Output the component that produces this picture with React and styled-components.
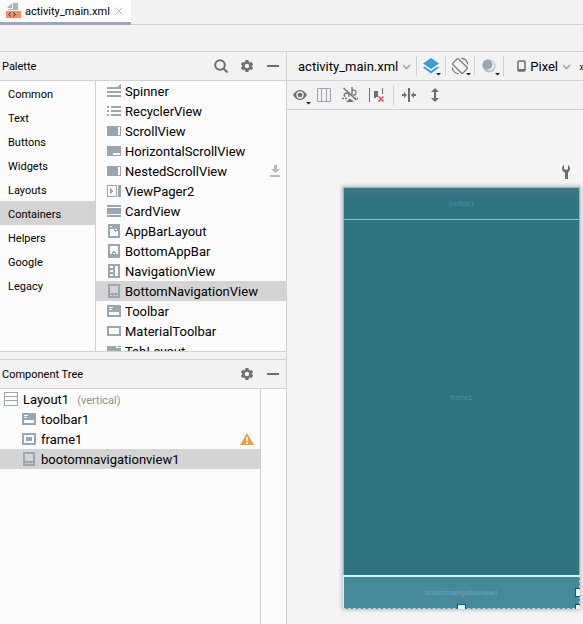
import React, { useState } from "react";
import styled, { createGlobalStyle } from "styled-components";

const line = "#d1d1d1";
const chrome = "#f2f2f2";
const list = "#fcfcfc";
const selected = "#d4d4d4";
const steel = "#9aa7b0";
const ink = "#6e6e6e";

const Global = createGlobalStyle`
  * { box-sizing: border-box; }
  html, body { margin: 0; }
  body {
    background: ${chrome};
    color: #000;
    font-family: Roboto, Inter, "Liberation Sans", sans-serif;
    font-size: 13px;
    overflow-x: hidden;
  }
  button { font: inherit; color: inherit; background: none; border: 0; padding: 0; margin: 0; text-align: left; }
  svg { display: block; flex: none; }
  ul { list-style: none; margin: 0; padding: 0; }
`;

const Page = styled.div`
  display: flex;
  flex-direction: column;
  min-height: 100vh;
`;

const TabBar = styled.div`
  display: flex;
  height: 25px;
  border-bottom: 1px solid ${line};
`;

const FileTab = styled.div`
  display: flex;
  align-items: center;
  height: 25px;
  padding: 0 8px 0 5px;
  background: #fff;
  border-bottom: 3px solid #9aa5b9;
  font-size: 11px;
`;

const TabName = styled.button`
  display: flex;
  align-items: center;
  gap: 4px;
  margin-right: 5px;
`;

const NavBar = styled.div`
  height: 27px;
  border-bottom: 1px solid ${line};
`;

const Workspace = styled.div`
  display: flex;
  flex: 1;
`;

const Side = styled.aside`
  display: flex;
  flex-direction: column;
  flex: 0 0 287px;
  border-right: 1px solid ${line};
`;

const PanelHeader = styled.header`
  display: flex;
  align-items: center;
  height: 29px;
  padding: 0 5px 0 2px;
  gap: 10px;
  border-bottom: 1px solid ${line};
  font-size: 11px;
`;

const PanelTitle = styled.h2`
  flex: 1;
  margin: 0;
  font-size: 11px;
  font-weight: 400;
`;

const PaletteBody = styled.div`
  display: flex;
  height: 271px;
  overflow: hidden;
  background: ${list};
  border-bottom: 1px solid ${line};
`;

const Categories = styled.ul`
  flex: 0 0 96px;
  border-right: 1px solid ${line};
`;

const Category = styled.button`
  display: block;
  width: 100%;
  height: 24px;
  padding: 3px 8px 0;
  font-size: 11px;
  background: ${(p) => (p.$on ? selected : "transparent")};
`;

const Items = styled.ul`
  flex: 1;
  min-width: 0;
`;

const Row = styled.button`
  display: flex;
  align-items: center;
  gap: ${(p) => p.$gap || 4}px;
  width: 100%;
  height: 20px;
  padding: 0 6px 0 ${(p) => p.$indent}px;
  white-space: nowrap;
  background: ${(p) => (p.$on ? selected : "transparent")};
`;

const RowText = styled.span`
  flex: 1;
  padding-top: 2px;
  line-height: 18px;
`;

const Hint = styled.span`
  margin-left: 8px;
  font-size: 11px;
  color: #8f8f8f;
`;

const Splitter = styled.div`
  height: 8px;
  border-bottom: 1px solid ${line};
`;

const TreeBody = styled.div`
  flex: 1;
  padding-right: 25px;
  background: ${list};
`;

const Tree = styled.ul`
  height: 100%;
  border-right: 1px solid ${line};
`;

const Editor = styled.main`
  display: flex;
  flex-direction: column;
  flex: 1;
  min-width: 0;
`;

const Toolbar = styled.div`
  display: flex;
  align-items: center;
  height: 29px;
  padding-left: ${(p) => p.$lead || 0}px;
  border-bottom: 1px solid ${line};
  overflow: hidden;
`;

const MenuButton = styled.button`
  display: flex;
  align-items: center;
  gap: 4px;
  flex: none;
  height: 28px;
  padding: 0 ${(p) => p.$end}px 0 ${(p) => p.$start || 0}px;
`;

const IconButton = styled.button`
  flex: none;
`;

const Divider = styled.span`
  flex: none;
  width: 1px;
  height: 20px;
  margin: 0 ${(p) => p.$space || 0}px;
  background: ${line};
`;

const Canvas = styled.div`
  display: flex;
  flex-direction: column;
  flex: 1;
  padding: 55px 3px 15px 56px;
  background: #f5f5f5;
`;

const CanvasTools = styled.div`
  display: flex;
  align-items: flex-start;
  justify-content: flex-end;
  height: 22px;
  padding-right: 10px;
`;

const Device = styled.div`
  position: relative;
  display: flex;
  flex-direction: column;
  flex: 1;
  min-height: 300px;
  border: 1px solid #74c3d5;
  background: #2f7282;
  color: #4e93a3;
  font-family: "Liberation Sans", sans-serif;
  font-size: 7px;
  box-shadow: 0 0 4px 1px rgba(0, 0, 0, 0.25);
`;

const Block = styled.div`
  display: flex;
  align-items: center;
  justify-content: center;
`;

const BarBlock = styled(Block)`
  height: 32px;
  border-bottom: 1px solid #74c9da;
  background: linear-gradient(#3f7585, #2f7282 45%);
`;

const FrameBlock = styled(Block)`
  flex: 1;
`;

const BottomBlock = styled(Block)`
  height: 34px;
  margin: 0 -1px -1px;
  border: 1px dashed #9fe0ee;
  border-top: 2px solid #d5f1f7;
  border-left: 1px solid #d5f1f7;
  background: #46899a;
  color: #69a6b5;
`;

const Handle = styled.span`
  position: absolute;
  border: 1px solid #14566a;
  background: #e6fbff;
  ${(p) => p.$at === "bottom" && "left: calc(50% - 5px); bottom: -1px; width: 9px; height: 5px; border-bottom: 0;"}
  ${(p) => p.$at === "right" && "right: -1px; bottom: 11px; width: 5px; height: 9px; border-right: 0;"}
  ${(p) => p.$at === "corner" && "right: -1px; bottom: -1px; width: 5px; height: 5px; border-right: 0; border-bottom: 0;"}
`;

const shapes = {
  spinner: "M0 3h10l4-3v5H0zM0 7h14v2H0zM0 11h14v2H0z",
  recycler: "M0 2h2v2H0zM4 2h10v2H4zM0 6h2v2H0zM4 6h10v2H4zM0 10h2v2H0zM4 10h10v2H4z",
  scroll: "M0 2h14v10H0zM11 3v8h2V3z",
  hscroll: "M0 2h14v10H0zM6 9v2h7V9z",
  pager: "M0 1h10v12H0zM1 2v10h8V2zM11 1h3v12h-3zM3 4l4 3-4 3z",
  card: "M0 1h14v2H0zM0 4h14v6H0zM0 11h14v2H0z",
  appbar: "M1 0h12v14H1zM3 2v1h2V2zM3 5v7h8V7H9v1H8V7H7V5zM8 5v1h2V5z",
  bottombar: "M1 0h12v14H1zM3 2v8h2V8h1V7h2v1h1v2h2V2zM6 9v1h2V9z",
  navigation: "M1 0h12v14H1zM3 2v2h3V2zM3 6v2h3V6zM3 10v2h3v-2zM8 2v10h3V2z",
  bottomnav: "M1 0h12v14H1zM3 2v7h8V2zM3 11v1h2v-1zM6 11v1h2v-1zM9 11v1h2v-1z",
  toolbar: "M0 1h14v12H0zM2 3v1h4V3zM2 5v1h3V5zM2 8v3h10V8z",
  material: "M0 2h14v10H0zM2 4v6h10V4z",
  tab: "M0 2h9v2h5v9H0zM10 2h4v1h-4z",
  linear: "M0 0h14v14H0zM1 1v3h12V1zM1 5v3h12V5zM1 9v4h12V9z",
  frame: "M0 1h14v12H0zM2 3v8h10V3zM4 5h6v4H4z",
};

const Shape = ({ name }) => (
  <svg width="14" height="14" fill={steel} fillRule="evenodd" shapeRendering="crispEdges" aria-hidden="true">
    <path d={shapes[name]} />
  </svg>
);

const Gear = () => (
  <svg width="16" height="16" viewBox="0 0 16 16" aria-hidden="true">
    <path
      fill={ink}
      fillRule="evenodd"
      d="M6.600 2h2.800l.4 1.800 1.100.6 1.800-.5 1.400 2.300L12.800 7.500v1l1.300 1.300-1.400 2.300-1.800-.5-1.100.6L9.400 14H6.600l-.4-1.800-1.100-.6-1.800.5-1.400-2.300L3.200 8.500v-1L1.900 6.200l1.400-2.300 1.800.5 1.100-.6zM8 5.700a2.300 2.300 0 1 0 0 4.600 2.300 2.300 0 0 0 0-4.600z"
    />
  </svg>
);

const Minus = () => (
  <svg width="16" height="16" aria-hidden="true"><path fill={ink} d="M2 7h12v2H2z" /></svg>
);

const Search = () => (
  <svg width="16" height="16" fill="none" stroke={ink} strokeWidth="2" aria-hidden="true">
    <circle cx="7" cy="7" r="4.800" /><path d="M10.500 10.500l4 4" />
  </svg>
);

const Chevron = () => (
  <svg width="9" height="8" fill="none" stroke={steel} strokeWidth="1.600" aria-hidden="true"><path d="M1 3l3.500 3.500L8 3" /></svg>
);

const Corner = ({ x, y }) => <path fill="#222" d={`M${x} ${y}h5l-2.500 2.500z`} />;

const LayoutFile = () => (
  <svg width="16" height="16" aria-hidden="true">
    <path fill="#a9b5bd" d="M7 0v5H2zM8 0h5v7H3V6h5z" />
    <path fill="#f78c66" d="M1 8h15v7H1z" />
    <path fill="none" stroke="#5b3a2e" d="M6 9.500L3.500 11.500 6 13.500M8 9.500l2.500 2-2.500 2" />
  </svg>
);

const Download = () => (
  <svg width="10" height="12" fill="#b3bdc4" aria-hidden="true"><path d="M4 0h3v4h3L5.500 8 1 4h3zM0 10h10v2H0z" /></svg>
);

const Warning = () => (
  <svg width="14" height="12" aria-hidden="true">
    <path fill="#f2a03a" d="M7 0l7 12H0z" /><path fill="#fff" d="M6 4h2v4H6zM6 9h2v2H6z" />
  </svg>
);

const Layers = () => (
  <svg width="28" height="28" aria-hidden="true">
    <path fill="#2f9fd4" d="M14 6l8 5.500-8 5.500-8-5.500zM6 15.500l1.500-1L14 19l6.500-4.500 1.500 1-8 6z" />
    <Corner x={19} y={21} />
  </svg>
);

const Orientation = () => (
  <svg width="28" height="28" aria-hidden="true">
    <g fill="none" stroke={ink} strokeWidth="1.200">
      <rect x="10" y="7" width="8" height="14" rx="1" transform="rotate(-45 14 14)" />
      <path d="M15.500 6.200a7.700 7.700 0 0 1 6.300 6.300M12.500 21.800a7.700 7.700 0 0 1-6.300-6.300" />
    </g>
    <Corner x={20} y={21} />
  </svg>
);

const Night = () => (
  <svg width="28" height="28" aria-hidden="true">
    <circle cx="14" cy="14" r="6.500" fill="#b4bec5" />
    <circle cx="14.500" cy="13.500" r="5" fill={chrome} />
    <circle cx="12.500" cy="12.500" r="5" fill={steel} />
    <Corner x={20} y={21} />
  </svg>
);

const Phone = () => (
  <svg width="9" height="12" aria-hidden="true">
    <rect x="1" y="1" width="7" height="10" rx="1" fill="none" stroke={ink} strokeWidth="1.500" /><path fill={ink} d="M1 9h7v2H1z" />
  </svg>
);

const Eye = () => (
  <svg width="26" height="28" aria-hidden="true">
    <path fill={ink} fillRule="evenodd" d="M6 14c2-3.500 4.500-5 7-5s5 1.500 7 5c-2 3.500-4.500 5-7 5s-5-1.500-7-5zM13 10.300a3.700 3.700 0 1 0 0 7.400 3.700 3.700 0 0 0 0-7.400z" />
    <circle cx="13" cy="14" r="2.300" fill={ink} />
    <Corner x={19} y={21} />
  </svg>
);

const Columns = () => (
  <svg width="26" height="28" fill="none" stroke={steel} aria-hidden="true"><path d="M4.500 7.500h13v13h-13zM8.500 7.500v13M13.500 7.500v13" /></svg>
);

const NoText = () => (
  <svg width="26" height="28" fill="none" stroke={ink} strokeWidth="1.300" aria-hidden="true">
    <path d="M4.500 7l13 12" />
    <path d="M6 15.500c-1.500-1-1-3.500 2-3.500h2v4M13 6v8M13 10c1-1.500 4-1 4 1.500 0 2-1.500 3-3 2.500" />
    <path d="M3 17.500h5M15 17.500h4" strokeDasharray="2 1" /><path fill={ink} stroke="none" d="M7 21l4-3.500 4 3.500z" />
  </svg>
);

const NoConnect = () => (
  <svg width="26" height="28" aria-hidden="true">
    <path fill={ink} d="M4 7h1v14H4zM9 10h4v6h-2v1H9zM17 7h1v6h-1z" />
    <path stroke="#e05561" strokeWidth="1.700" d="M13.500 15.500l5 5M18.500 15.500l-5 5" />
  </svg>
);

const MarginH = () => (
  <svg width="26" height="28" fill={ink} aria-hidden="true"><path d="M12 7h2v14h-2zM6 13h2v-2l3 3-3 3v-2H6zM20 13h-2v-2l-3 3 3 3v-2h2z" /></svg>
);

const MarginV = () => (
  <svg width="26" height="28" fill={ink} aria-hidden="true"><path d="M13 7l4 4h-3v6h3l-4 4-4-4h3v-6H9z" /></svg>
);

const Wrench = () => (
  <svg width="8" height="14" fill={ink} aria-hidden="true"><path d="M2 0v4l2 1 2-1V0c1.500.8 2 2 2 3.500 0 2-1 3.300-2 4V14H3V7.500C1 6.800 0 5.500 0 3.500 0 2 .5.800 2 0z" /></svg>
);

const Close = () => (
  <svg width="8" height="8" stroke="#b8bdc1" aria-hidden="true"><path d="M.5.5l7 7M7.500.5l-7 7" /></svg>
);

const categories = ["Common", "Text", "Buttons", "Widgets", "Layouts", "Containers", "Helpers", "Google", "Legacy"];

const widgets = [
  ["Spinner", "spinner"],
  ["RecyclerView", "recycler"],
  ["ScrollView", "scroll"],
  ["HorizontalScrollView", "hscroll"],
  ["NestedScrollView", "scroll", true],
  ["ViewPager2", "pager"],
  ["CardView", "card"],
  ["AppBarLayout", "appbar"],
  ["BottomAppBar", "bottombar"],
  ["NavigationView", "navigation"],
  ["BottomNavigationView", "bottomnav"],
  ["Toolbar", "toolbar"],
  ["MaterialToolbar", "material"],
  ["TabLayout", "tab"],
];

const nodes = [
  { name: "Layout1", icon: "linear", indent: 4, gap: 5, hint: "(vertical)" },
  { name: "toolbar1", icon: "toolbar", indent: 22 },
  { name: "frame1", icon: "frame", indent: 22, warn: true },
  { name: "bootomnavigationview1", icon: "bottomnav", indent: 22 },
];

export default function App() {
  const [category, setCategory] = useState("Containers");
  const [widget, setWidget] = useState("BottomNavigationView");
  const [node, setNode] = useState("bootomnavigationview1");

  return (
    <Page>
      <Global />
      <TabBar>
        <FileTab>
          <TabName><LayoutFile />activity_main.xml</TabName>
          <IconButton aria-label="Close tab"><Close /></IconButton>
        </FileTab>
      </TabBar>
      <NavBar />
      <Workspace>
        <Side>
          <PanelHeader>
            <PanelTitle>Palette</PanelTitle>
            <IconButton aria-label="Search palette"><Search /></IconButton>
            <IconButton aria-label="Palette settings"><Gear /></IconButton>
            <IconButton aria-label="Hide palette"><Minus /></IconButton>
          </PanelHeader>
          <PaletteBody>
            <Categories>
              {categories.map((name) => (
                <li key={name}>
                  <Category $on={name === category} onClick={() => setCategory(name)}>{name}</Category>
                </li>
              ))}
            </Categories>
            <Items>
              {widgets.map(([name, icon, download]) => (
                <li key={name}>
                  <Row $indent={11} $on={name === widget} onClick={() => setWidget(name)}>
                    <Shape name={icon} />
                    <RowText>{name}</RowText>
                    {download && <Download />}
                  </Row>
                </li>
              ))}
            </Items>
          </PaletteBody>
          <Splitter />
          <PanelHeader>
            <PanelTitle>Component Tree</PanelTitle>
            <IconButton aria-label="Tree settings"><Gear /></IconButton>
            <IconButton aria-label="Hide component tree"><Minus /></IconButton>
          </PanelHeader>
          <TreeBody>
            <Tree>
              {nodes.map((n) => (
                <li key={n.name}>
                  <Row $indent={n.indent} $gap={n.gap || 5} $on={n.name === node} onClick={() => setNode(n.name)}>
                    <Shape name={n.icon} />
                    <RowText>{n.name}{n.hint && <Hint>{n.hint}</Hint>}</RowText>
                    {n.warn && <Warning />}
                  </Row>
                </li>
              ))}
            </Tree>
          </TreeBody>
        </Side>
        <Editor>
          <Toolbar $lead={11}>
            <MenuButton $end={5}>activity_main.xml<Chevron /></MenuButton>
            <Divider />
            <IconButton aria-label="Design surface"><Layers /></IconButton>
            <Divider />
            <IconButton aria-label="Orientation"><Orientation /></IconButton>
            <Divider />
            <IconButton aria-label="Night mode"><Night /></IconButton>
            <Divider />
            <MenuButton $start={13} $end={8}><Phone />Pixel<Chevron /></MenuButton>
            <IconButton aria-label="More">»</IconButton>
          </Toolbar>
          <Toolbar>
            <IconButton aria-label="View options"><Eye /></IconButton>
            <IconButton aria-label="Columns"><Columns /></IconButton>
            <IconButton aria-label="Hide text"><NoText /></IconButton>
            <IconButton aria-label="Autoconnect"><NoConnect /></IconButton>
            <Divider $space={2} />
            <IconButton aria-label="Expand horizontally"><MarginH /></IconButton>
            <IconButton aria-label="Expand vertically"><MarginV /></IconButton>
          </Toolbar>
          <Canvas>
            <CanvasTools>
              <IconButton aria-label="Attributes"><Wrench /></IconButton>
            </CanvasTools>
            <Device>
              <BarBlock>toolbar1</BarBlock>
              <FrameBlock>frame1</FrameBlock>
              <BottomBlock>bootomnavigationview1</BottomBlock>
              <Handle $at="bottom" />
              <Handle $at="right" />
              <Handle $at="corner" />
            </Device>
          </Canvas>
        </Editor>
      </Workspace>
    </Page>
  );
}
